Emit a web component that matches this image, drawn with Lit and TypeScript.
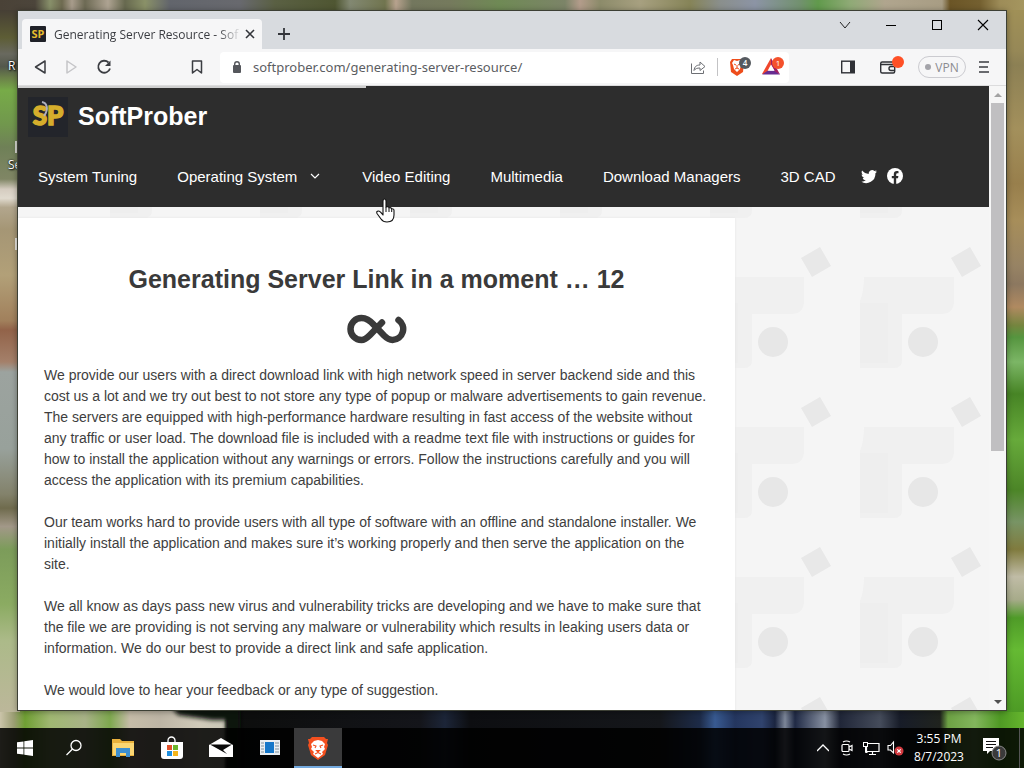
import { LitElement, html, svg, css } from "lit";
import { customElement } from "lit/decorators.js";

const menu = ["System Tuning", "Operating System", "Video Editing", "Multimedia", "Download Managers", "3D CAD"];

const paragraphs = [
  "We provide our users with a direct download link with high network speed in server backend side and this cost us a lot and we try out best to not store any type of popup or malware advertisements to gain revenue. The servers are equipped with high-performance hardware resulting in fast access of the website without any traffic or user load. The download file is included with a readme text file with instructions or guides for how to install the application without any warnings or errors. Follow the instructions carefully and you will access the application with its premium capabilities.",
  "Our team works hard to provide users with all type of software with an offline and standalone installer. We initially install the application and makes sure it’s working properly and then serve the application on the site.",
  "We all know as days pass new virus and vulnerability tricks are developing and we have to make sure that the file we are providing is not serving any malware or vulnerability which results in leaking users data or information. We do our best to provide a direct link and safe application.",
  "We would love to hear your feedback or any type of suggestion.",
];

const icon = (w: number, h: number, body: unknown) =>
  html`<svg width=${w} height=${h} viewBox="0 0 ${w} ${h}" fill="none" aria-hidden="true">${body}</svg>`;

const stops = (list: [number, string][], size: number) =>
  list.map(([at, color]) => svg`<stop offset=${at / size} stop-color=${color}></stop>`);

const wallpaper = html`
  <svg class="wallpaper" viewBox="0 0 1024 768" preserveAspectRatio="none" aria-hidden="true">
    <defs>
      <filter id="soft"><feGaussianBlur stdDeviation="2"></feGaussianBlur></filter>
      <linearGradient id="wt" x2="1" y2="0">
        ${stops([[0, "#4a4237"], [35, "#4c453b"], [50, "#88906a"], [62, "#6e6a50"], [72, "#a89c8c"], [85, "#6d6a54"], [108, "#aea392"], [125, "#67694f"], [145, "#8a9168"], [170, "#62656c"], [240, "#68696e"], [275, "#5a6043"], [335, "#4f5632"], [350, "#828872"], [385, "#71754f"], [396, "#b7a28e"], [412, "#73775e"], [450, "#757a5d"], [500, "#6f8a55"], [565, "#7c8468"], [580, "#b39c8b"], [600, "#8c8b6a"], [640, "#a7a080"], [690, "#868458"], [720, "#8a8f8c"], [755, "#8c94a5"], [800, "#72916f"], [818, "#619a4c"], [850, "#8faa76"], [885, "#b0a58e"], [942, "#a89d84"], [950, "#6b5526"], [980, "#746030"], [1000, "#9d8c58"], [1024, "#a5965f"]], 1024)}
      </linearGradient>
      <linearGradient id="wl" x2="0" y2="1">
        ${stops([[0, "#463f35"], [30, "#5d5d35"], [48, "#69695f"], [62, "#53584b"], [74, "#6b8049"], [88, "#77ab48"], [125, "#71974d"], [150, "#6f8057"], [185, "#808665"], [196, "#d5ccc0"], [206, "#e0dace"], [216, "#b2a68d"], [240, "#a59675"], [290, "#b2a078"], [340, "#a1805c"], [350, "#926349"], [385, "#a4806a"], [396, "#9ca39f"], [480, "#98a19b"], [530, "#83826b"], [545, "#6f6b4d"], [565, "#a29888"], [590, "#7c9c5a"], [650, "#8bab62"], [690, "#acba89"], [768, "#bcb79a"]], 768)}
      </linearGradient>
      <linearGradient id="wr" x2="0" y2="1">
        ${stops([[0, "#a09057"], [45, "#968857"], [60, "#8c8054"], [130, "#a3905c"], [190, "#987f4c"], [230, "#a78e5a"], [280, "#978364"], [300, "#8c7860"], [325, "#b08a61"], [345, "#75853f"], [358, "#56953f"], [385, "#7cb666"], [420, "#478425"], [470, "#67aa3b"], [525, "#4c8527"], [560, "#789465"], [590, "#807b3e"], [620, "#c0bca6"], [645, "#a7ab8a"], [665, "#4f9b28"], [700, "#65ba33"], [768, "#4d9b25"]], 768)}
      </linearGradient>
      <linearGradient id="wb" x2="1" y2="0">
        ${stops([[0, "#cbc4a9"], [14, "#9a9d72"], [25, "#6f9f33"], [50, "#a0b872"], [85, "#a8b287"], [110, "#7ea84e"], [130, "#c6bca8"], [160, "#bdb5a5"], [200, "#d0cab9"], [224, "#c9c7b7"], [228, "#0c0d0c"], [420, "#14151a"], [445, "#1c2538"], [470, "#0d0e11"], [660, "#15171b"], [700, "#1d2b48"], [715, "#385a91"], [735, "#24365f"], [762, "#30436d"], [775, "#1b2540"], [785, "#7c8698"], [795, "#202a45"], [825, "#8790a1"], [840, "#202638"], [880, "#454c5b"], [900, "#171c28"], [940, "#20231e"], [948, "#6da144"], [975, "#83b65d"], [1000, "#4f9a24"], [1024, "#65b52d"]], 1024)}
      </linearGradient>
    </defs>
    <rect width="1024" height="14" fill="url(#wt)"></rect>
    <rect y="708" width="1024" height="60" fill="url(#wb)"></rect>
    <polygon points="166,700 240,700 240,780 226,780 226,720 212,720 178,715" fill="#111210" filter="url(#soft)"></polygon>
    <rect y="10" width="20" height="702" fill="url(#wl)"></rect>
    <rect x="1004" y="10" width="20" height="702" fill="url(#wr)"></rect>
    <rect x="15" y="141" width="3" height="12" fill="#d8d8d2"></rect>
    <rect x="15" y="238" width="3" height="12" fill="#e8e6e0"></rect>
  </svg>
`;

const lion = svg`
  <path d="M5 1h12l2 2 2 0-1 4 1 2-3 10-7 5-7-5L1 9l1-2L1 3h2z" fill="#f4501f"></path>
  <path d="M7 5l4-1 4 1 3 3-1 3 1 2-3 3 1 2-5 4-5-4 1-2-3-3 1-2-1-3z" fill="#fff"></path>
  <path d="M6 9l3 1-1 2M16 9l-3 1 1 2M9.500 14.500h3L11 16zM8 18l3-1.500 3 1.500" stroke="#f4501f" stroke-width="1.100"></path>`;

@customElement("app-root")
export class AppRoot extends LitElement {
  static styles = css`
    :host { display: block; height: 100vh; overflow: hidden; }
    * { box-sizing: border-box; }
    button { border: 0; background: none; padding: 0; margin: 0; font: inherit; color: inherit; display: flex; align-items: center; justify-content: center; flex: none; }
    a { color: inherit; text-decoration: none; }
    svg { display: block; flex: none; }
    .screen { position: relative; height: 100%; display: flex; flex-direction: column; font-family: "Open Sans", "Noto Sans", sans-serif; background: #777a60; }
    .wallpaper { position: absolute; inset: 0; width: 100%; height: 100%; }
    .shortcut { position: absolute; left: 8px; color: #fff; font-size: 12px; line-height: 16px; text-shadow: 0 0 2px #000, 1px 1px 2px #000; }
    .first { top: 58px; }
    .second { top: 157px; }
    .desktop { position: relative; flex: 1; min-height: 0; padding: 10px 17px 17px; display: flex; }
    .window { flex: 1; min-width: 0; display: flex; flex-direction: column; border: 1px solid #3d4035; box-shadow: 0 1px 6px rgba(0, 0, 0, 0.35); background: #f6f6f7; overflow: hidden; }

    .tabs { display: flex; height: 38px; background: #d8dbdf; padding-left: 4px; }
    .tab { display: flex; align-items: center; width: 240px; height: 30px; margin-top: 8px; padding: 0 4px 0 8px; background: #f6f6f7; border-radius: 4px 4px 0 0; font-size: 12px; color: #3b3d42; }
    .tab-title { flex: 1; margin-left: 8px; white-space: nowrap; overflow: hidden; -webkit-mask-image: linear-gradient(90deg, #000 164px, transparent 188px); mask-image: linear-gradient(90deg, #000 164px, transparent 188px); }
    .tab-close { width: 16px; height: 16px; }
    .new-tab { width: 28px; height: 28px; margin: 9px 0 0 8px; }
    .controls { display: flex; margin-left: auto; }
    .controls button { width: 46px; height: 28px; }

    .toolbar { display: flex; align-items: center; height: 37px; border-bottom: 1px solid #dcdcdd; color: #3b3d42; }
    .toolbar .nav { width: 32px; height: 32px; }
    .back { margin-left: 6px; }
    .toolbar .bookmark { margin-left: auto; }
    .left { display: flex; align-items: center; width: 195px; }
    .address { flex: 1; min-width: 0; display: flex; align-items: center; height: 31px; margin-left: 7px; padding: 0 5px 0 12px; background: #fff; border-radius: 4px; }
    .address input { flex: 1; min-width: 0; border: 0; outline: 0; padding: 0; margin-left: 11px; background: none; font: 13px "Noto Sans", "Open Sans", sans-serif; color: #5b5d62; }
    .divider { width: 1px; height: 18px; margin: 0 11px; background: #c3c3c5; }
    .bat { margin-left: 11px; }
    .right { display: flex; align-items: center; width: 217px; padding-left: 52px; }
    .wallet { margin-left: 24px; }
    .vpn { height: 22px; width: 48px; margin: 0 13px; gap: 4px; border: 1px solid #cbcbd0; border-radius: 11px; font-size: 12px; color: #8b8b90; }
    .dot { width: 6px; height: 6px; border-radius: 3px; background: #a3a3a9; }

    .viewport { position: relative; flex: 1; min-height: 0; display: flex; }
    .strip { position: absolute; left: 0; top: 0; width: 348px; height: 2px; background: #cfcfcf; }
    .page { position: relative; flex: 1; min-width: 0; overflow: hidden; font-family: "Liberation Sans", Arial, sans-serif; }
    .header { background: #2d2d2d; color: #fff; }
    .brand { display: flex; align-items: center; gap: 10px; height: 61px; padding: 0 10px; font-size: 25px; font-weight: 700; }
    .menu { display: flex; align-items: center; height: 60px; padding-bottom: 2px; font-size: 15px; }
    .menu a { display: flex; align-items: center; gap: 12px; padding: 0 20px; white-space: nowrap; }
    .menu .parent { padding-right: 21px; }
    .menu .social { padding: 0 5px; }
    .body { position: relative; display: grid; grid-template-columns: minmax(0, 1fr) 254px; background: #f5f5f5; }
    .pattern { position: absolute; inset: 0; width: 100%; height: 100%; }
    .article { position: relative; margin-top: 11px; padding: 42px 26px; min-height: 600px; background: #fff; box-shadow: 0 0 2px #e4e4e4; color: #3e3e3e; font-size: 14px; line-height: 21px; }
    .article h1 { margin: 0 0 16px; font-size: 25px; line-height: 38px; text-align: center; color: #3a3a3a; }
    .article p { margin: 0 0 21px; }
    .loader { display: flex; justify-content: center; margin-bottom: 20px; }

    .scrollbar { width: 17px; display: flex; flex-direction: column; padding: 0 2px; background: #f6f6f6; }
    .scrollbar button { height: 17px; width: 13px; }
    .track { flex: 1; }
    .thumb { height: 59%; background: #c0bfc1; }

    .pointer { position: absolute; left: 375px; top: 198px; }

    .taskbar { position: relative; display: flex; align-items: stretch; height: 40px; background: rgba(0, 0, 0, 0.86); color: #fff; }
    .taskbar button { width: 49px; }
    .taskbar .start { width: 49px; }
    .taskbar .active { width: 48px; background: #3a3a3b; border-bottom: 2px solid #74aadf; padding-top: 2px; }
    .tray { display: flex; margin-left: auto; }
    .tray button { width: 24px; }
    .tray .clock { display: flex; flex-direction: column; justify-content: center; align-items: center; width: 64px; font-size: 12px; line-height: 18px; }
    .tray .notes { width: 46px; }
    .edge { width: 5px; margin-left: 2px; border-left: 1px solid #555; }
  `;

  tabs() {
    return html`
      <div class="tabs">
        <div class="tab">
          ${icon(16, 16, svg`<rect width="16" height="16" rx="1" fill="#1f2128"></rect><text x="8" y="12" text-anchor="middle" font-family="Open Sans" font-weight="700" font-size="11" fill="#e5bd2e">SP</text>`)}
          <span class="tab-title">Generating Server Resource - Sof</span>
          <button class="tab-close" aria-label="Close tab">${icon(10, 10, svg`<path d="M1 1l8 8M9 1l-8 8" stroke="#33353a" stroke-width="1.600"></path>`)}</button>
        </div>
        <button class="new-tab" aria-label="New tab">${icon(12, 12, svg`<path d="M6 0v12M0 6h12" stroke="#33353a" stroke-width="1.800"></path>`)}</button>
        <div class="controls">
          <button aria-label="Search tabs">${icon(12, 12, svg`<path d="M1 3l5 6 5-6" stroke="#222"></path>`)}</button>
          <button aria-label="Minimize">${icon(10, 10, svg`<path d="M0 5.500h10" stroke="#000"></path>`)}</button>
          <button aria-label="Maximize">${icon(10, 10, svg`<rect x="0.500" y="0.500" width="9" height="9" stroke="#000"></rect>`)}</button>
          <button aria-label="Close">${icon(12, 12, svg`<path d="M1 1l10 10M11 1L1 11" stroke="#000" stroke-width="1.100"></path>`)}</button>
        </div>
      </div>
    `;
  }

  toolbar() {
    return html`
      <div class="toolbar">
        <div class="left">
          <button class="nav back" aria-label="Back">${icon(14, 16, svg`<path d="M12 2v12L2.500 8z" stroke="#3b3d42" stroke-width="1.500" stroke-linejoin="round"></path>`)}</button>
          <button class="nav" aria-label="Forward">${icon(14, 16, svg`<path d="M2 2v12l9-6z" stroke="#c5c5c8" stroke-width="1.500" stroke-linejoin="round"></path>`)}</button>
          <button class="nav" aria-label="Reload">${icon(16, 16, svg`<path d="M12.500 3.500A6 6 0 1 0 14 9.500" stroke="#3b3d42" stroke-width="1.800"></path><path d="M14.500 1.500v5.500h-5.500z" fill="#3b3d42"></path>`)}</button>
          <button class="nav bookmark" aria-label="Bookmark">${icon(12, 16, svg`<path d="M1.500 2h9v12L6 10.500 1.500 14z" stroke="#3b3d42" stroke-width="1.500" stroke-linejoin="round"></path>`)}</button>
        </div>
        <div class="address">
          ${icon(10, 14, svg`<rect x="1" y="5" width="8" height="8" rx="1" fill="#55575c"></rect><path d="M2.700 6V4a2.300 2.300 0 0 1 4.600 0v2" stroke="#55575c" stroke-width="1.400"></path>`)}
          <input aria-label="Address" value="softprober.com/generating-server-resource/" />
          <button aria-label="Share">${icon(16, 16, svg`<path d="M1.500 4.500v10h12v-3" stroke="#6d6f74"></path><path d="M4 11.500c.5-4 2.500-5.500 6-5.500V3l5 4.500-5 4V9c-3 0-4.500.5-6 2.500z" stroke="#6d6f74" stroke-linejoin="round"></path>`)}</button>
          <span class="divider"></span>
          <button aria-label="Shields">${icon(22, 22, svg`
            <path d="M3 3h10l2 3-1 10-6 4-6-4L1 6z" fill="#ee4d1b"></path>
            <path d="M8 5l3-1 2 3-1 2-1 4-3 3-3-3-1-4-1-2 2-3z" fill="#fff"></path>
            <path d="M5 8l2 1M11 8l-2 1M8 9v3M6 13l2-1 2 1" stroke="#ee4d1b"></path>
            <circle cx="16" cy="7" r="6" fill="#55595f"></circle>
            <text x="16" y="10" text-anchor="middle" font-size="8" font-family="Open Sans" font-weight="600" fill="#fff">4</text>`)}</button>
          <button class="bat" aria-label="Rewards">${icon(22, 22, svg`
            <path d="M9 2L0 18h6l3-7z" fill="#f0462c"></path>
            <path d="M0 18.500h18l-5-4H6z" fill="#662d91"></path>
            <path d="M9 2l9 16.500-5-3L9 9z" fill="#9e1f63"></path>
            <path d="M9 8.500l3.400 6.200H5.600z" fill="#fff"></path>
            <circle cx="16" cy="7" r="6" fill="#f4512c"></circle>
            <text x="16" y="10" text-anchor="middle" font-size="8" font-family="Open Sans" fill="#fff">1</text>`)}</button>
        </div>
        <div class="right">
          <button aria-label="Sidebar">${icon(14, 14, svg`<rect x="0.700" y="1.200" width="12.600" height="11.600" stroke="#2f3136" stroke-width="1.400"></rect><rect x="9" y="1" width="4" height="12" fill="#2f3136"></rect>`)}</button>
          <button class="wallet" aria-label="Wallet">${icon(26, 22, svg`
            <rect x="1.700" y="6" width="14" height="11" rx="1.500" stroke="#2f3136" stroke-width="1.400"></rect>
            <path d="M2 8.500h12M16 10.500h-4a2 2 0 0 0 0 4h4" stroke="#2f3136" stroke-width="1.400"></path>
            <circle cx="19" cy="6" r="6" fill="#ff5026"></circle>`)}</button>
          <button class="vpn"><span class="dot"></span>VPN</button>
          <button aria-label="Menu">${icon(10, 14, svg`<path d="M0 2h10M0 7h9M0 12h10" stroke="#3b3d42" stroke-width="1.600"></path>`)}</button>
        </div>
      </div>
    `;
  }

  header() {
    return html`
      <header class="header">
        <div class="brand">
          ${icon(40, 40, svg`<rect width="40" height="40" fill="#23252b"></rect>
            <text x="20" y="28" text-anchor="middle" font-family="Lato" font-weight="900" font-size="26" fill="#d6ae2c" stroke="#d6ae2c" stroke-width="1.500">SP</text>
            <path d="M14 5c5 1 7 7 2 14" stroke="#aeb0bd" stroke-width="2"></path>`)}
          <span>SoftProber</span>
        </div>
        <nav class="menu">
          ${menu.map((name, i) => i === 1
            ? html`<a class="parent" href="#">${name}${icon(12, 12, svg`<path d="M2 4l4 4 4-4" stroke="#fff" stroke-width="1.200"></path>`)}</a>`
            : html`<a href="#">${name}</a>`)}
          <a class="social" href="#" aria-label="Twitter">${icon(16, 16, svg`<path fill="#fff" d="M16 3.500c-.6.3-1.200.4-1.900.5.7-.4 1.200-1 1.400-1.800-.6.4-1.300.6-2.100.8A3.300 3.300 0 0 0 7.800 6C5.100 5.900 2.700 4.600 1.100 2.600c-.9 1.500-.4 3.400 1 4.400-.5 0-1-.2-1.500-.4 0 1.500 1.100 2.900 2.600 3.300-.5.1-1 .1-1.500 0 .4 1.300 1.600 2.300 3.100 2.300A6.600 6.600 0 0 1 0 13.600 9.300 9.300 0 0 0 14.400 5.200c.6-.4 1.200-1 1.600-1.700z"></path>`)}</a>
          <a class="social" href="#" aria-label="Facebook">${icon(16, 16, svg`<circle cx="8" cy="8" r="8" fill="#fff"></circle><path d="M6.800 16v-5.700h-2V8h2V6.200c0-2 1.200-3.100 3-3.100.9 0 1.700.2 1.700.2v2h-1c-1 0-1.300.6-1.300 1.200V8h2.200l-.4 2.300H9.200V16z" fill="#2d2d2d"></path>`)}</a>
        </nav>
      </header>
    `;
  }

  page() {
    return html`
      <div class="viewport">
        <div class="page">
          ${this.header()}
          <div class="body">
            <svg class="pattern" aria-hidden="true">
              <defs>
                <pattern id="shapes" x="92" y="30" width="150" height="150" patternUnits="userSpaceOnUse">
                  <path d="M4 40h90v24q0 13-13 13H42v46q0 8-8 8H0V64q4-10 4-24z" fill="#f0f0f0"></path>
                  <path d="M0 66h28v60H0z" fill="#eeeeee"></path>
                  <circle cx="63" cy="105" r="15" fill="#e7e7e7"></circle>
                  <rect x="95" y="14" width="22" height="22" fill="#e8e8e8" transform="rotate(-30 106 25)"></rect>
                </pattern>
              </defs>
              <rect width="100%" height="100%" fill="url(#shapes)"></rect>
            </svg>
            <main class="article">
              <h1>Generating Server Link in a moment … 12</h1>
              <div class="loader">${icon(60, 31, svg`<path d="M35 8.500L23 21C19.500 24.500 17.500 26 14.500 26a11 11 0 0 1 0-22C20 4 23.500 7 27 11l10 10.500C40 24.500 42 26 45.500 26A11 11 0 0 0 51.500 6" stroke="#3a3a3a" stroke-width="6.500" stroke-linecap="round" stroke-linejoin="round"></path>`)}</div>
              ${paragraphs.map((text) => html`<p>${text}</p>`)}
            </main>
          </div>
        </div>
        <div class="scrollbar">
          <button aria-label="Scroll up">${icon(8, 4, svg`<path d="M0 4l4-4 4 4z" fill="#a3a3a3"></path>`)}</button>
          <div class="track"><div class="thumb"></div></div>
          <button aria-label="Scroll down">${icon(8, 4, svg`<path d="M0 0l4 4 4-4z" fill="#505050"></path>`)}</button>
        </div>
        <div class="strip"></div>
      </div>
    `;
  }

  taskbar() {
    return html`
      <div class="taskbar">
        <button class="start" aria-label="Start">${icon(16, 16, svg`<path d="M0 2.300l6.500-.9v6.100H0zM7.300 1.300L16 0v7.500H7.300zM0 8.400h6.500v6.200L0 13.700zM7.300 8.400H16V16l-8.700-1.200z" fill="#fff"></path>`)}</button>
        <button aria-label="Search">${icon(18, 18, svg`<circle cx="11" cy="6.500" r="5" stroke="#fff" stroke-width="1.300"></circle><path d="M7.500 10L1.500 16" stroke="#fff" stroke-width="1.300"></path>`)}</button>
        <button aria-label="File Explorer">${icon(22, 18, svg`<path d="M0 0h8l2 2h12v15H0z" fill="#e9b13c"></path><path d="M1 4h21v12H1z" fill="#fbd672"></path><path d="M4 18V9h14v9h-4v-4H8v4z" fill="#3d8fd0"></path>`)}</button>
        <button aria-label="Store">${icon(24, 24, svg`<path d="M8 7V4.500a3.500 3.500 0 0 1 7 0V7" stroke="#fff" stroke-width="1.300"></path><path d="M1 6h22v14q0 3-3 3H4q-3 0-3-3z" fill="#fff"></path><path d="M7 9h5v5H7z" fill="#e2512a"></path><path d="M13 9h5v5h-5z" fill="#6cb52d"></path><path d="M7 15h5v5H7z" fill="#1e8fe0"></path><path d="M13 15h5v5h-5z" fill="#f5b51b"></path>`)}</button>
        <button aria-label="Mail">${icon(24, 20, svg`<path d="M0 7L12 0l12 7v12H0z" fill="#fff"></path><path d="M1 6.500h22L14 12l4 4L1 6.500z" fill="#0a0a0a"></path>`)}</button>
        <button aria-label="Reader">${icon(20, 16, svg`<rect width="20" height="15" fill="#e9eef2"></rect><rect x="5" y="2" width="9" height="11" fill="#1577c9"></rect><path d="M1 3h3M1 6h3M1 9h3M1 12h3M15 3h4M15 6h4M15 9h4M15 12h4" stroke="#7f929e"></path>`)}</button>
        <button class="active" aria-label="Brave">${icon(22, 24, lion)}</button>
        <div class="tray">
          <button aria-label="Hidden icons">${icon(12, 8, svg`<path d="M0 7l6-6 6 6" stroke="#fff" stroke-width="1.300"></path>`)}</button>
          <button aria-label="Meet now">${icon(14, 16, svg`<rect x="2" y="4.500" width="7" height="7" rx="1" stroke="#fff" stroke-width="1.200"></rect><path d="M9 7l3-1.500v5L9 9M3 2q3.500-2 7 0M3 14q3.500 2 7 0" stroke="#fff" stroke-width="1.200"></path>`)}</button>
          <button aria-label="Network">${icon(18, 16, svg`<path d="M5.500 3.500H17v8H4.500V6M10.500 11.500V14M7 14.500h7" stroke="#fff" stroke-width="1.200"></path><rect x="1.500" y="2.500" width="4" height="4" stroke="#fff"></rect><path d="M3.500 6.500v6h2" stroke="#fff"></path>`)}</button>
          <button aria-label="Volume muted">${icon(17, 16, svg`<path d="M1 5.500h2.500L6.500 2v11L3.500 10H1z" stroke="#fff" stroke-width="1.100"></path><circle cx="12" cy="11" r="4.500" fill="#d33a40"></circle><path d="M10.300 9.300l3.400 3.400M13.700 9.300l-3.400 3.400" stroke="#fff" stroke-width="1.200"></path>`)}</button>
          <div class="clock"><span>3:55 PM</span><span>8/7/2023</span></div>
          <button class="notes" aria-label="Notifications">${icon(26, 26, svg`
            <path d="M2 3h16v13H9l-3 3v-3H2z" fill="#fff"></path><path d="M5 6.500h10M5 9.500h10M5 12.500h7" stroke="#111"></path>
            <circle cx="18" cy="18" r="7" fill="#3a3a3a" stroke="#8a8a8a"></circle>
            <text x="18" y="22" text-anchor="middle" font-size="11" font-family="Open Sans" fill="#fff">1</text>`)}</button>
          <span class="edge"></span>
        </div>
      </div>
    `;
  }

  render() {
    return html`
      <div class="screen">
        ${wallpaper}
        <span class="shortcut first">R</span>
        <span class="shortcut second">Se</span>
        <div class="desktop">
          <div class="window">${this.tabs()}${this.toolbar()}${this.page()}</div>
        </div>
        ${this.taskbar()}
        <svg class="pointer" width="20" height="26" viewBox="0 0 20 26" aria-hidden="true">
          <path d="M8 14V3q0-2 1.500-2T11 3v6q2.500-1 3 .8 2.200-.6 2.700 1 2.300-.2 2.300 1.700V17q0 7-7 7-4 0-6-3L2 15.500Q1 13 3.500 13q1.500 0 4.500 4z" fill="#fff" stroke="#111" stroke-width="1.100" stroke-linejoin="round"></path>
          <path d="M11 9v5M14 10v4M16.700 11v3" stroke="#111"></path>
        </svg>
      </div>
    `;
  }
}
